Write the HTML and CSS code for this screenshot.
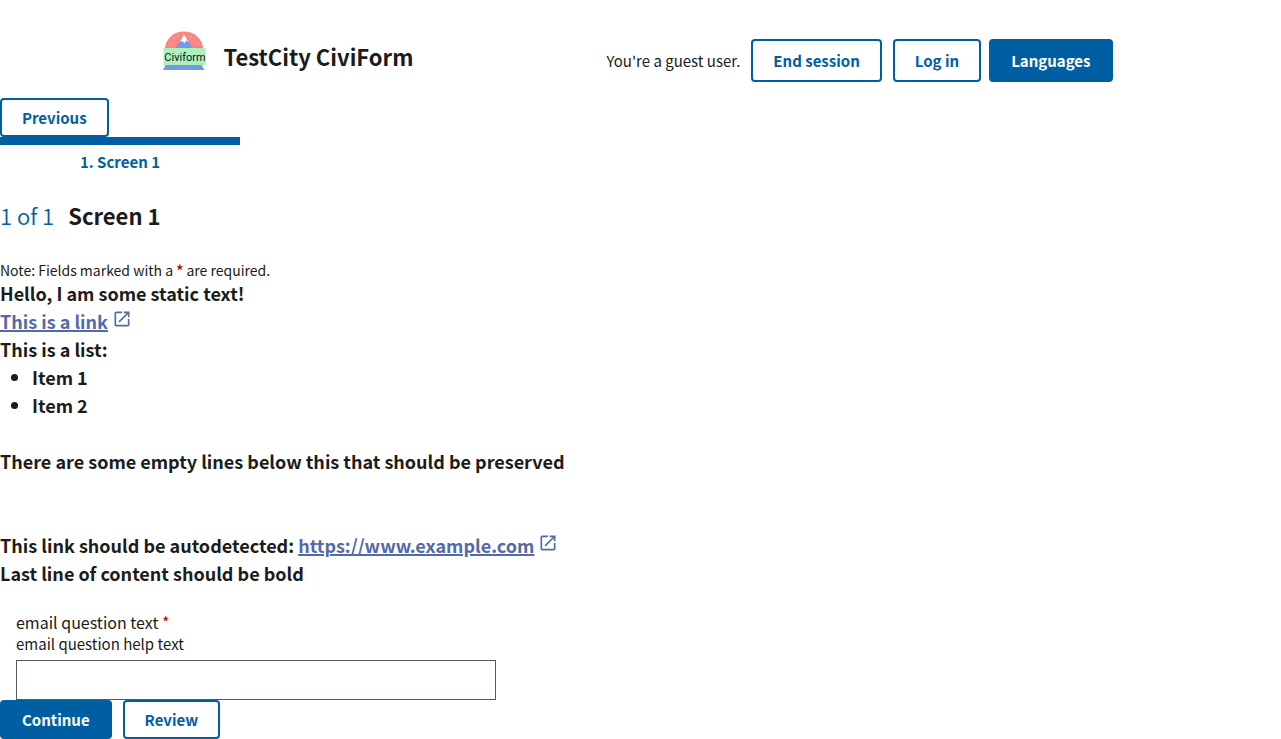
FILE: index.html
```html
<!DOCTYPE html>
<html lang="en">
<head>
<meta charset="utf-8">
<meta name="viewport" content="width=device-width, initial-scale=1">
<title>Screen 1 - TestCity CiviForm</title>
<link rel="stylesheet" href="styles.css">
</head>
<body>
<header class="header">
  <div class="brand">
    <svg class="logo" viewBox="0 0 48 48" aria-hidden="true">
      <path d="M5 25a19 17.500 0 0 1 38 0z" fill="#fa8583"/>
      <path d="M15 25L24 10.500 33 25z" fill="#7398e6"/>
      <path d="M20 18L24 10.500 28.500 18 26 16.500 24.500 19.500 22.500 17z" fill="#fff"/>
      <g fill="#fdc4bd"><circle cx="10" cy="20" r=".7"/><circle cx="14" cy="15" r=".7"/><circle cx="18" cy="12" r=".7"/><circle cx="15" cy="19" r=".7"/><circle cx="31" cy="13" r=".7"/><circle cx="34" cy="18" r=".7"/><circle cx="38" cy="20" r=".7"/></g>
      <path d="M6 40h35l3.500 6H3z" fill="#7398e6"/>
      <rect x="3.500" y="24" width="42" height="17" fill="#acf1bb"/>
      <text x="25" y="36.500" text-anchor="middle" class="logo-text">Civiform</text>
    </svg>
    <span class="brand-name">TestCity CiviForm</span>
  </div>
  <nav class="account">
    <span class="guest">You're a guest user.</span>
    <a class="button button-tall" href="#">End session</a>
    <a class="button button-tall" href="#">Log in</a>
    <button class="button button-tall button-filled languages" type="button">Languages</button>
  </nav>
</header>
<main>
  <a class="button" href="#">Previous</a>
  <div class="steps"><div class="step">1. Screen 1</div></div>
  <h1 class="heading"><span class="counter">1 of 1</span><span>Screen 1</span></h1>
  <p class="note">Note: Fields marked with a <span class="required">*</span> are required.</p>
  <form>
    <div class="static">
      <p>Hello, I am some static text!</p>
      <p><a class="link" href="#">This is a link</a><svg class="external" viewBox="0 0 24 24" aria-hidden="true"><path d="M19 19H5V5h7V3H5a2 2 0 0 0-2 2v14a2 2 0 0 0 2 2h14c1.100 0 2-.9 2-2v-7h-2v7zM14 3v2h3.590l-9.830 9.830 1.410 1.410L19 6.410V10h2V3h-7z"/></svg></p>
      <p>This is a list:</p>
      <ul class="list"><li>Item 1</li><li>Item 2</li></ul>
      <br>
      <p>There are some empty lines below this that should be preserved</p>
      <br><br>
      <p>This link should be autodetected: <a class="link" href="#">https://www.example.com</a><svg class="external" viewBox="0 0 24 24" aria-hidden="true"><path d="M19 19H5V5h7V3H5a2 2 0 0 0-2 2v14a2 2 0 0 0 2 2h14c1.100 0 2-.9 2-2v-7h-2v7zM14 3v2h3.590l-9.830 9.830 1.410 1.410L19 6.410V10h2V3h-7z"/></svg></p>
      <p>Last line of content should be bold</p>
    </div>
    <div class="field">
      <label class="label" for="email">email question text <span class="required">*</span></label>
      <div class="help" id="email-help">email question help text</div>
      <input class="input" id="email" type="email" aria-describedby="email-help" required>
    </div>
    <div class="actions">
      <button class="button button-filled" type="submit">Continue</button>
      <button class="button" type="button">Review</button>
    </div>
  </form>
</main>
</body>
</html>
```
FILE: styles.css
```css
* { box-sizing: border-box; }
body {
  margin: 0;
  color: #1b1b1b;
  background: #fff;
  font: 15px/22px "Noto Sans CJK SC", "Noto Sans", sans-serif;
}
p { margin: 0; }
.header {
  display: flex;
  justify-content: space-between;
  align-items: flex-start;
  max-width: 1024px;
  margin: 0 auto;
  padding: 24px 40px 10px 31px;
}
.brand { display: flex; align-items: center; gap: 16px; height: 64px; }
.logo { width: 48px; height: 48px; align-self: flex-start; }
.logo-text { font: 11px Roboto, sans-serif; fill: #111; }
.brand-name { font-size: 22px; font-weight: 700; line-height: 32px; }
.account { display: flex; align-items: center; gap: 11px; padding-top: 15px; }
.languages { margin-left: -3px; }
.button {
  display: inline-block;
  padding: 8px 20px;
  border: 2px solid #005ea2;
  border-radius: 4px;
  background: #fff;
  color: #005ea2;
  font: inherit;
  font-weight: 700;
  line-height: 19px;
  text-decoration: none;
  vertical-align: top;
  cursor: pointer;
}
.button-tall { padding-top: 10px; padding-bottom: 10px; }
.button-filled { background: #005ea2; color: #fff; }
.steps { display: flex; }
.step {
  width: 240px;
  padding-top: 6px;
  border-top: 8px solid #005ea2;
  color: #005ea2;
  font-weight: 700;
  text-align: center;
}
.heading {
  display: flex;
  gap: 14px;
  margin: 26px 0 30px;
  font-size: 22px;
  line-height: 32px;
}
.counter { color: #005ea2; font-weight: 350; }
.note { font-size: 14px; line-height: 18px; }
.help { font-size: 15px; }
.required { color: #b50909; }
.note .required { font-weight: 700; }
.static { font-size: 18px; font-weight: 700; line-height: 28px; }
.link { color: #5469a8; text-decoration-thickness: 2px; text-underline-offset: 1px; }
.external { width: 20px; height: 20px; margin-left: 4px; fill: #5469a8; }
.static p { height: 28px; }
.list { margin: 0; padding-left: 32px; }
.field { padding: 24px 16px 0; }
.label { display: block; font-size: 16px; }
.input {
  display: block;
  width: 100%;
  max-width: 480px;
  height: 40px;
  margin-top: 5px;
  padding: 8px;
  border: 1px solid #565c65;
  border-radius: 0;
  font: inherit;
}
.actions { display: flex; gap: 11px; }
```
